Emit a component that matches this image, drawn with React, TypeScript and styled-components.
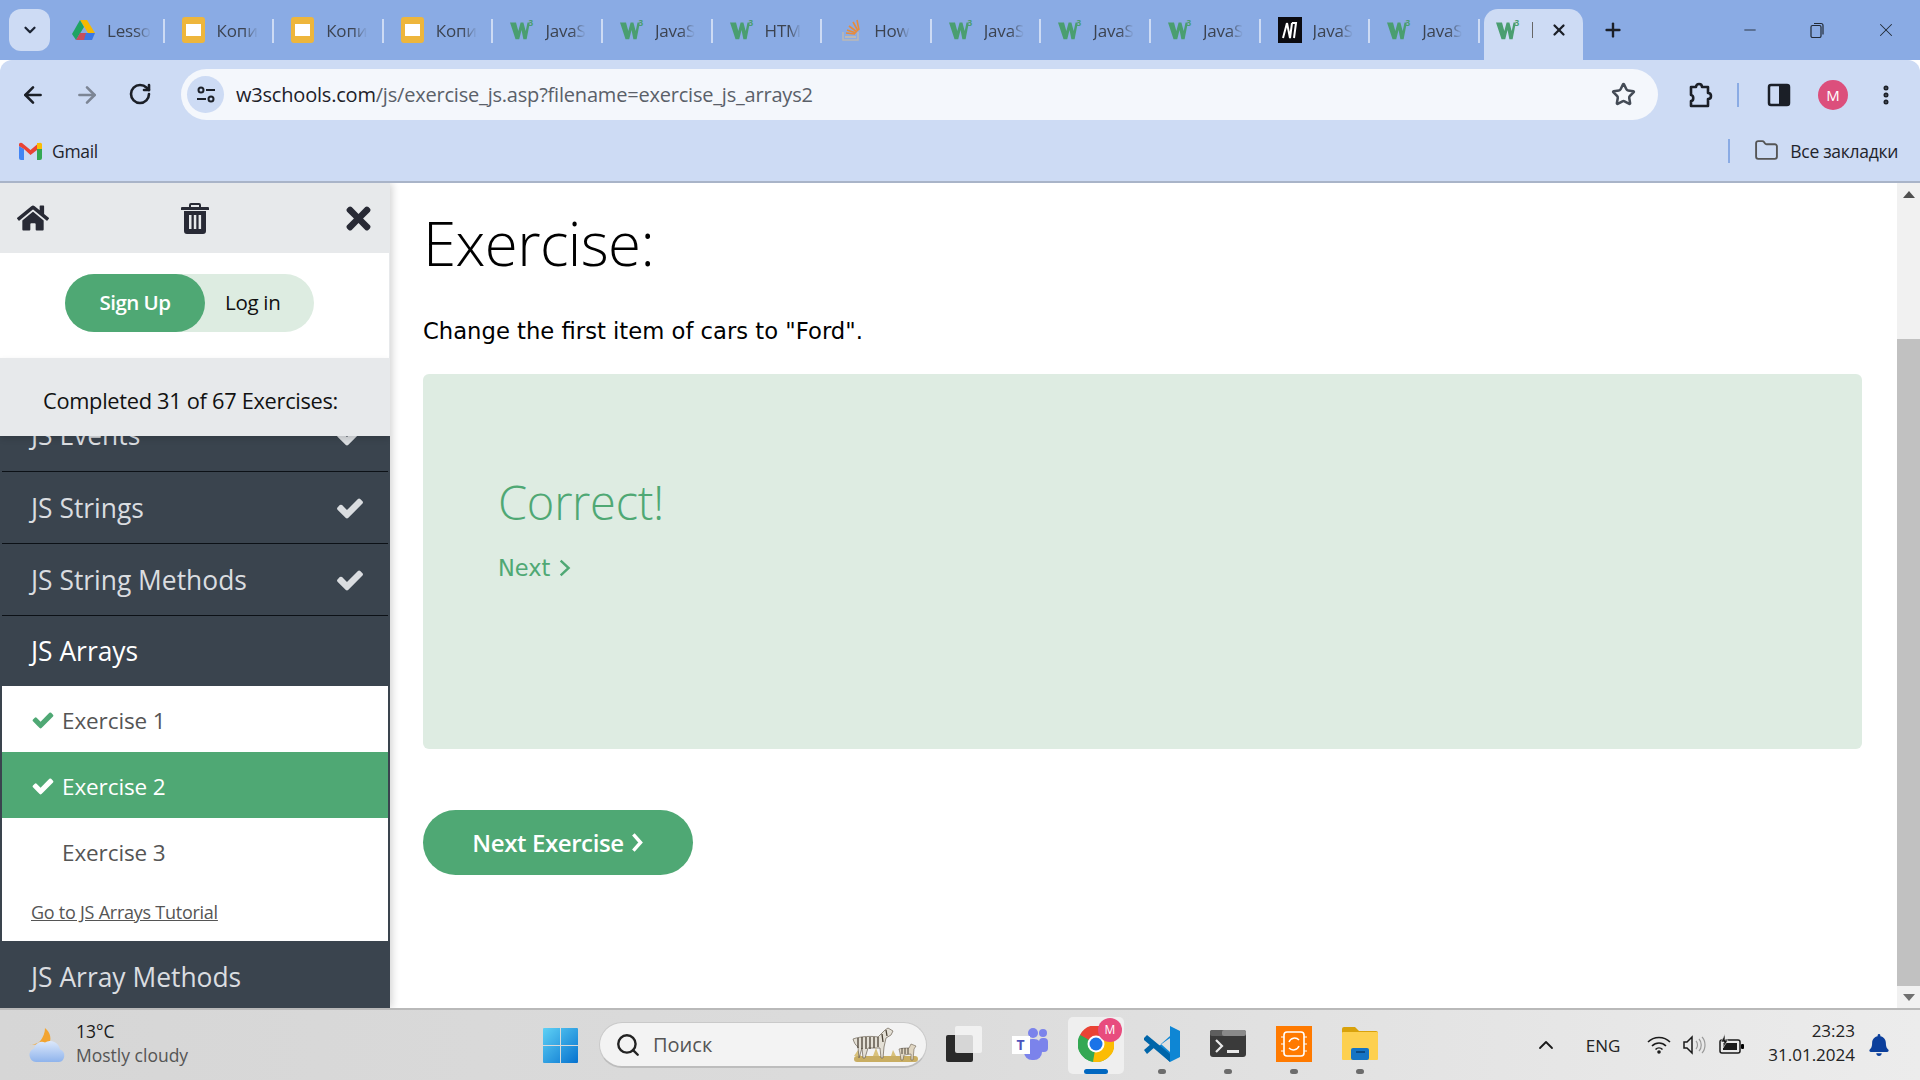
import React from "react";
import styled, { createGlobalStyle } from "styled-components";
import {
  ArrowLeft, ArrowRight, RotateCw, Star, MoreVertical, Plus, X, Minus, ChevronUp, Folder, Search, ChevronDown,
} from "lucide-react";
import { FaHome, FaTimes, FaBell } from "react-icons/fa";

const Global = createGlobalStyle`
  html, body { margin: 0; padding: 0; overflow: hidden; background: #fff; }
  * { box-sizing: border-box; }
  #root { width: 1920px; height: 1080px; }
`;

const Screen = styled.div`
  width: 1920px; height: 1080px; display: flex; flex-direction: column; overflow: hidden;
  font-family: "Open Sans", "Liberation Sans", sans-serif; color: #111;
`;
const TabStrip = styled.div`
  height: 60px; background: #8aabe4; display: flex; align-items: flex-end; padding-left: 9px; flex: none;
`;
const Collapse = styled.div`
  width: 41px; height: 42px; margin: 0 5px 9px 0; border-radius: 12px; background: #cddbf4;
  display: flex; align-items: center; justify-content: center; color: #1c2433;
`;
const Tab = styled.div`
  width: 109.6px; height: 51px; display: flex; align-items: center; padding: 0 0 9px 17px; flex: none; position: relative;
  &::after { content: ""; position: absolute; right: 0; top: 10px; height: 24px; width: 2px; background: #cddbf4; }
`;
const FaviconBox = styled.span`
  width: 24px; height: 24px; flex: none; display: flex; align-items: center; justify-content: center;
`;
const TabTitle = styled.span`
  margin-left: 11px; white-space: nowrap; font-size: 17px; color: #3c4350; letter-spacing: -0.2px;
  -webkit-mask-image: linear-gradient(to right, #000 65%, transparent);
  mask-image: linear-gradient(to right, #000 65%, transparent);
`;
const ActiveTab = styled.div`
  width: 99px; height: 51px; background: #cddbf4; border-radius: 14px 14px 0 0; display: flex; align-items: center;
  padding: 0 0 9px 12px; flex: none; margin-left: 4px; color: #1b1f27;
`;
const Cursor = styled.span`
  margin-left: 12px; width: 1px; height: 16px; background: #666;
`;
const TabClose = styled.span`
  margin-left: 17px; display: flex;
`;
const NewTab = styled.span`
  margin: 0 0 9px 18px; display: flex; width: 24px; height: 42px; align-items: center; justify-content: center; color: #1b1f27;
`;
const WindowControls = styled.div`
  margin: 0 23px 9px auto; height: 42px; display: flex; align-items: center; gap: 50px; color: #222a36;
`;
const Toolbar = styled.div`
  height: 69px; background: #cddbf4; display: flex; align-items: center; padding: 0 0 0 20px; flex: none; border-radius: 12px 12px 0 0;
`;
const NavIcon = styled.span<{ $dim?: boolean }>`
  width: 26px; height: 26px; margin-right: 28px; display: flex; color: ${(p) => (p.$dim ? "#7c8594" : "#1b1f27")};
`;
const Omnibox = styled.div`
  width: 1477px; height: 51px; margin-left: -1px; background: #f4f7fc; border-radius: 26px; display: flex; align-items: center; padding: 0 18px 0 6px;
`;
const SiteChip = styled.span`
  width: 37px; height: 37px; border-radius: 50%; background: #cddbf4; display: flex; align-items: center; justify-content: center; flex: none;
`;
const Url = styled.span`
  margin-left: 12px; font-size: 20px; color: #5a6069; white-space: nowrap; letter-spacing: -0.2px;
  b { font-weight: 400; color: #1d2129; }
`;
const StarWrap = styled.span`
  margin-left: auto; display: flex; color: #444b56; margin-right: 4px;
`;
const ToolRight = styled.div`
  display: flex; align-items: center; flex: 1; padding-left: 28px; color: #1b1f27;
`;
const ToolSep = styled.span`
  width: 2px; height: 24px; background: #8aabe4; margin: 0 28px 0 23px;
`;
const Avatar = styled.span`
  width: 30px; height: 30px; border-radius: 50%; background: #dc4f7c; color: #fff; font-size: 15px;
  display: flex; align-items: center; justify-content: center; margin-left: 27px;
`;
const Dots = styled.span`
  display: flex; margin-left: 26px; color: #1b1f27;
`;
const BookmarkBar = styled.div`
  height: 54px; background: #cddbf4; border-bottom: 2px solid #a9b4c8; display: flex; align-items: center; padding: 0 22px 9px 19px; flex: none;
`;
const BookmarkLabel = styled.span<{ $size?: number; $gap?: number }>`
  font-size: ${(p) => p.$size ?? 17}px; color: #1f242c; margin-left: ${(p) => p.$gap ?? 11}px; letter-spacing: -0.3px;
`;
const BookSep = styled.span`
  width: 2px; height: 24px; background: #8aabe4; margin-left: auto; margin-right: 24px;
`;
const Page = styled.div`
  flex: 1; min-height: 0; display: flex; background: #fff; overflow: hidden;
`;
const Sidebar = styled.aside`
  width: 390px; flex: none; display: flex; flex-direction: column; background: #e7e9eb; box-shadow: 2px 0 8px rgba(0,0,0,.18); overflow: hidden; position: relative;
`;
const SideHead = styled.div`
  height: 70px; background: #e7e9eb; display: flex; align-items: center; justify-content: space-between; padding: 0 14px 0 17px; color: #282a35; flex: none;
`;
const AuthPanel = styled.div`
  height: 105px; background: #fff; padding: 21px 0 0 65px; flex: none; margin-right: 1px;
`;
const AuthPill = styled.div`
  width: 249px; height: 58px; border-radius: 29px; background: #ddece1; display: flex; align-items: center;
`;
const SignUp = styled.span`
  width: 140px; height: 58px; padding-bottom: 2px; border-radius: 29px; background: #4fa874; color: #fff; font-size: 20.500px; font-weight: 600;
  display: flex; align-items: center; justify-content: center; letter-spacing: -0.5px;
`;
const LogIn = styled.span`
  margin: 0 0 2px 20px; font-size: 20.500px; letter-spacing: -0.3px; color: #111;
`;
const Progress = styled.div`
  height: 78px; background: #e7e9eb; padding: 28px 9px 0 0; text-align: center; font-size: 21.800px; color: #111; letter-spacing: -0.3px; flex: none;
  box-shadow: 0 3px 6px rgba(0,0,0,.12); position: relative; z-index: 1; line-height: 30px;
`;
const Lessons = styled.div`
  flex: 1; min-height: 0; overflow: hidden; background: #3a444e;
`;
const Lesson = styled.div<{ $active?: boolean; $clip?: boolean }>`
  height: ${(p) => (p.$clip ? 36 : p.$active ? 70 : 72)}px; margin: 0 2px; padding-left: 29px; border-bottom: 1px solid ${(p) => (p.$active ? "transparent" : "#0c1116")};
  display: flex; align-items: ${(p) => (p.$clip ? "flex-start" : "center")}; justify-content: space-between; padding-right: 23px;
  color: ${(p) => (p.$active ? "#fff" : "#dadde0")}; font-size: 26.400px; font-weight: ${(p) => (p.$active ? 500 : 400)}; overflow: hidden;
`;
const ClipLabel = styled.span`
  display: flex; width: 100%; justify-content: space-between; align-items: center; height: 34px; margin-top: -18px; flex: none;
`;
const ExercisePanel = styled.div`
  background: #fff; margin: 0 2px; height: 255px;
`;
const ExerciseRow = styled.div<{ $on?: boolean }>`
  height: 66px; display: flex; align-items: center; padding: 2px 0 0 29px; font-size: 22.500px; letter-spacing: -0.1px;
  background: ${(p) => (p.$on ? "#4fa874" : "#fff")}; color: ${(p) => (p.$on ? "#fff" : "#555")};
`;
const Tick = styled.span<{ $on?: boolean }>`
  width: 31px; display: flex; color: ${(p) => (p.$on ? "#fff" : "#4fa874")}; flex: none;
`;
const TutorialLink = styled.a`
  display: block; margin: 16px 0 0 29px; font-size: 18px; color: #555; text-decoration: underline; letter-spacing: -0.25px;
`;
const Main = styled.main`
  flex: 1; min-width: 0; padding: 25px 35px 0 33px;
`;
const Title = styled.h1`
  margin: 0; font-size: 60px; line-height: 70px; font-weight: 350; color: #000; letter-spacing: -0.6px;
`;
const Question = styled.p`
  margin: 39px 0 0; font-family: "DejaVu Sans", sans-serif; font-size: 22.700px; line-height: 28px; color: #000;
`;
const ResultBox = styled.div`
  margin-top: 29px; height: 375px; background: #deece2; border-radius: 6px; padding: 97px 0 0 75px; color: #4fa874;
`;
const Correct = styled.div`
  font-size: 47px; line-height: 62px; font-weight: 350; letter-spacing: -0.3px;
`;
const NextLink = styled.div`
  margin-top: 19px; line-height: 32px; display: flex; align-items: center; gap: 9px;
  font-family: "DejaVu Sans", sans-serif; font-size: 22.500px;
`;
const NextButton = styled.button`
  margin-top: 61px; width: 270px; height: 65px; border: 0; border-radius: 33px; background: #4fa874; color: #fff; font-family: "Open Sans", sans-serif;
  font-size: 24px; font-weight: 600; display: flex; align-items: center; justify-content: center; gap: 7px; letter-spacing: -0.4px;
`;
const Scrollbar = styled.div`
  width: 23px; flex: none; background: #f1f1f1; display: flex; flex-direction: column; align-items: center;
`;
const ScrollArrow = styled.span<{ $down?: boolean }>`
  height: 22px; width: 100%; display: flex; align-items: center; justify-content: center; flex: none;
  &::before { content: ""; border-left: 6px solid transparent; border-right: 6px solid transparent;
    ${(p) => (p.$down ? "border-top: 7px solid #707070;" : "border-bottom: 7px solid #505050;")} }
`;
const ScrollGap = styled.span`
  height: 134px; flex: none;
`;
const ScrollThumb = styled.span`
  flex: 1; width: 100%; background: #c1c1c1; margin: 0 1px;
`;
const Taskbar = styled.footer`
  height: 72px; flex: none; border-top: 2px solid #b9b9b9; background: linear-gradient(to right, #d6d6d6, #dcdcdc 50%, #ececec);
  display: flex; align-items: center; padding: 0 0 0 28px;
`;
const Weather = styled.div`
  width: 515px; display: flex; align-items: center; gap: 11px; flex: none;
`;
const WeatherText = styled.div`
  font-size: 17.500px; line-height: 24px; color: #1a1a1a; padding-bottom: 4px;
  small { display: block; font-size: 17.500px; color: #555; }
`;
const SearchBox = styled.div`
  width: 328px; height: 46px; margin-left: 21px; border-radius: 23px; background: #f3f3f3; border: 1px solid #c9c9c9; border-bottom: 2px solid #bdbdbd;
  display: flex; align-items: center; padding: 0 6px 0 15px; color: #222;
`;
const SearchText = styled.span`
  margin-left: 12px; font-size: 20px; color: #555;
`;
const Zebra = styled.span`
  margin-left: auto; display: flex;
`;
const Cells = styled.div`
  display: flex; margin-left: 4px;
`;
const Cell = styled.div<{ $active?: boolean }>`
  width: 66px; height: 57px; display: flex; flex-direction: column; align-items: center; justify-content: flex-end; position: relative;
  &::before { content: ""; position: absolute; left: 5px; right: 5px; top: 0; bottom: 0; border-radius: 5px; background: ${(p) => (p.$active ? "#efefef" : "transparent")}; }
`;
const CellIcon = styled.span`
  width: 36px; height: 36px; display: flex; align-items: center; position: relative; margin-bottom: 7px;
`;
const Indicator = styled.span<{ $active?: boolean; $off?: boolean }>`
  width: ${(p) => (p.$active ? 24 : 8)}px; height: 5px; border-radius: 3px; position: relative;
  background: ${(p) => (p.$off ? "transparent" : p.$active ? "#0067c0" : "#6c6c6c")};
`;
const ChromeBadge = styled.span`
  position: absolute; right: -8px; top: -8px; width: 24px; height: 24px; border-radius: 50%; background: #e84c7e; color: #fff; font-size: 12px; display: flex; align-items: center; justify-content: center;
`;
const Tray = styled.div`
  margin-left: auto; display: flex; align-items: center; color: #1a1a1a; padding-right: 30px;
`;
const Eng = styled.span`
  margin: 0 27px 0 28px; font-size: 17px; color: #222;
`;
const TrayIcons = styled.div`
  display: flex; align-items: center; gap: 12px; margin-right: 24px;
`;
const Clock = styled.div`
  text-align: right; font-size: 17px; line-height: 24px; color: #222; margin-right: 13px; padding-bottom: 4px;
`;

const Check = ({ size }: { size: number }) => (
  <svg width={size} height={size} viewBox="0 0 1792 1792" fill="currentColor">
    <path d="M1671 566q0 40-28 68l-724 724-136 136q-28 28-68 28t-68-28l-136-136-362-362q-28-28-28-68t28-68l136-136q28-28 68-28t68 28l294 295 656-657q28-28 68-28t68 28l136 136q28 28 28 68z" />
  </svg>
);
const Chevron = ({ w, h, sw }: { w: number; h: number; sw: number }) => (
  <svg width={w} height={h} viewBox={`0 0 ${w} ${h}`} fill="none" stroke="currentColor" strokeWidth={sw}>
    <path d={`M${sw * 0.7} ${sw * 0.7}L${w - sw} ${h / 2}L${sw * 0.7} ${h - sw * 0.7}`} />
  </svg>
);
const W3 = () => (
  <svg width="26" height="24" viewBox="0 0 26 24">
    <polygon points="0,4 6.500,4 9,13 11.500,4 14.500,4 17,13 19,4 21.500,4 18,22 14.500,22 12.500,12 10,22 6,22" fill="#4a9e70" />
    <text x="20" y="8" fontSize="9" fontWeight="700" fill="#4a9e70" fontFamily="Open Sans">3</text>
  </svg>
);
const Drive = () => (
  <svg width="24" height="22" viewBox="0 0 24 22">
    <polygon points="8,1 15,1 23,14 16,14" fill="#f6b900" />
    <polygon points="8,1 0,15 4,21 12,8" fill="#1fa463" />
    <polygon points="4,21 20,21 23,14 8,14" fill="#3977e6" />
    <polygon points="4,21 12,21 14,14 8,14" fill="#e8453c" opacity=".8" />
  </svg>
);
const Slides = () => (
  <svg width="24" height="26" viewBox="0 0 24 26">
    <rect width="23" height="26" rx="3" fill="#eeb63c" />
    <rect x="4" y="7" width="15" height="12" fill="#fff" />
  </svg>
);
const Stack = () => (
  <svg width="20" height="24" viewBox="0 0 20 24" fill="none">
    <path d="M4 19h11" stroke="#bcb9b5" strokeWidth="2" /><path d="M2 14v8h15v-8" stroke="#bcb9b5" strokeWidth="1.500" />
    <path d="M5 15l9 1M6 12l9 3M8 8l8 6M12 4l5 9M16 2l2 10" stroke="#e88b3a" strokeWidth="1.600" />
  </svg>
);
const MdnM = () => (
  <svg width="24" height="26" viewBox="0 0 24 26">
    <rect width="24" height="26" fill="#0b0b10" />
    <path d="M5 21L9 6M12 21L14 6M9 6l3 15M14 6l4 0-2 15" stroke="#fff" strokeWidth="2" fill="none" />
  </svg>
);
const Gmail = () => (
  <svg width="23" height="18" viewBox="0 0 23 18">
    <path d="M0 4v12a2 2 0 0 0 2 2h3V7z" fill="#4285f4" />
    <path d="M23 4v12a2 2 0 0 1-2 2h-3V7z" fill="#34a853" />
    <path d="M18 1v6l5 0V3a2 2 0 0 0-3-2z" fill="#fbbc04" />
    <path d="M5 7L0 4V3a2 2 0 0 1 3-2l8.500 7L18 2.500V8l-6.500 5z" fill="#ea4335" />
  </svg>
);
const Trash = () => (
  <svg width="28" height="32" viewBox="0 0 28 32" fill="#282a35">
    <path d="M10 1h8a2 2 0 0 1 2 2v2h7a1 1 0 0 1 1 1v2H0V6a1 1 0 0 1 1-1h7V3a2 2 0 0 1 2-2zm0 2v2h8V3z" fillRule="evenodd" />
    <path d="M3 9h22v20a3 3 0 0 1-3 3H6a3 3 0 0 1-3-3zm5 4v14h2.500V13zm4.800 0v14h2.500V13zm4.800 0v14h2.500V13z" fillRule="evenodd" />
  </svg>
);
const Tune = () => (
  <svg width="20" height="20" viewBox="0 0 20 20" fill="none" stroke="#1d2129" strokeWidth="2">
    <circle cx="5" cy="5" r="2.500" /><path d="M10 5h9M1 14h9" /><circle cx="15" cy="14" r="2.500" />
  </svg>
);
const Puzzle = () => (
  <svg width="28" height="28" viewBox="0 0 28 28" fill="none" stroke="#1b1f27" strokeWidth="2.600" strokeLinejoin="round">
    <path d="M5 6h5c0-4 6-4 6 0h6v6c4 0 4 6 0 6v7H5v-5c3 0 3-6 0-6z" />
  </svg>
);
const SidePanel = () => (
  <svg width="24" height="24" viewBox="0 0 24 24">
    <rect x="2" y="2" width="20" height="20" rx="2" fill="none" stroke="#1b1f27" strokeWidth="2.500" /><rect x="12" y="2" width="10" height="20" fill="#1b1f27" />
  </svg>
);
const Restore = () => (
  <svg width="16" height="16" viewBox="0 0 16 16" fill="none" stroke="#222a36" strokeWidth="1.200">
    <rect x="2" y="3.500" width="10" height="12" rx="1.500" /><path d="M5 1.500h7a2 2 0 0 1 2 2v9" />
  </svg>
);
const CloudMoon = () => (
  <svg width="37" height="36" viewBox="0 0 37 36">
    <defs><linearGradient id="cl" x1="0" y1="0" x2="0" y2="1"><stop offset="0" stopColor="#dce8fb" /><stop offset="1" stopColor="#8fb4ec" /></linearGradient></defs>
    <path d="M17 1c6 5 7 12 3 18L1 17c5 1 9 0 12-4 2-3 4-7 4-12z" fill="#f2a431" />
    <path d="M8 35a7 7 0 0 1-2-13.500 8 8 0 0 1 11-6 10 10 0 0 1 15 7 6.500 6.500 0 0 1-1 12.500z" fill="url(#cl)" />
  </svg>
);
const WinLogo = () => (
  <svg width="35" height="35" viewBox="0 0 35 35">
    <defs><linearGradient id="w" x1="0" y1="0" x2="1" y2="1"><stop offset="0" stopColor="#5fd1f5" /><stop offset="1" stopColor="#0672cf" /></linearGradient></defs>
    <path d="M0 1a1 1 0 0 1 1-1h16v17H0zM18 0h16a1 1 0 0 1 1 1v16H18zM0 18h17v17H1a1 1 0 0 1-1-1zM18 18h17v16a1 1 0 0 1-1 1H18z" fill="url(#w)" />
  </svg>
);
const ZebraArt = () => (
  <svg width="69" height="36" viewBox="0 0 69 36">
    <rect x="3" y="29" width="64" height="6" rx="3" fill="#c9ae63" />
    <path d="M3 29l4-6 3 6zM22 29l3-8 3 8zM40 29l2-6 3 6z" fill="#d9c27c" />
    <path d="M2 12c8-3 20-3 25-2l7-7 3-2 5 3-2 4-5 3-2 9-1 11h-2l-1-10-12 0-3 10h-2l-1-10-3 10H8l-1-11c-3-2-4-5-5-8z" fill="#e4e0d6" stroke="#6a6052" strokeWidth=".7" />
    <path d="M7 11v10M11 10v12M15 10v12M19 10v12M23 10v11M27 10v10M31 7l1 8M35 3l1 6" stroke="#4b4336" strokeWidth="1.300" />
    <path d="M48 22c3-1 8-1 10-1l2-4 5 2-2 3-1 11h-2v-6l-7 1-1 5h-2l-1-7z" fill="#e0d6c2" stroke="#6a6052" strokeWidth=".6" />
    <path d="M51 21v6M54 21v6M57 21v6" stroke="#4b4336" strokeWidth="1" />
  </svg>
);
const TaskView = () => (
  <svg width="36" height="36" viewBox="0 0 36 36">
    <rect x="0" y="9" width="27" height="27" rx="2" fill="#2a2a2a" />
    <rect x="9" y="0" width="27" height="27" rx="2" fill="#f4f4f4" opacity=".85" />
  </svg>
);
const Teams = () => (
  <svg width="36" height="32" viewBox="0 0 36 32">
    <circle cx="31" cy="5" r="4" fill="#7b83eb" /><rect x="27" y="10" width="9" height="14" rx="4" fill="#7b83eb" />
    <circle cx="21" cy="5" r="5" fill="#7b83eb" /><rect x="12" y="11" width="18" height="21" rx="8" fill="#7b83eb" />
    <rect x="0" y="8" width="18" height="18" fill="#fff" />
    <text x="4.500" y="22" fontSize="14" fontWeight="700" fill="#4b53bc" fontFamily="Open Sans">T</text>
  </svg>
);
const Chrome = () => (
  <svg width="36" height="36" viewBox="0 0 36 36">
    <circle cx="18" cy="18" r="18" fill="#34a853" />
    <path d="M18 18L2 9a18 18 0 0 1 32 0z" fill="#ea4335" /><path d="M2 9a18 18 0 0 0 13 26.800L18 18z" fill="#34a853" />
    <path d="M34 9a18 18 0 0 1-19 26.800L18 18z" fill="#fbbc04" />
    <circle cx="18" cy="18" r="8.500" fill="#fff" /><circle cx="18" cy="18" r="6.500" fill="#1a73e8" />
  </svg>
);
const VSCode = () => (
  <svg width="36" height="36" viewBox="0 0 36 36">
    <path d="M26 0l10 5v26l-10 5-14-14 14-10zm0 10L17 18l9 8z" fill="#0e86d4" fillRule="evenodd" />
    <path d="M3 9l23 19v8L0 14V12zM0 24l8-7 4 3-9 8z" fill="#0065a9" />
  </svg>
);
const Terminal = () => (
  <svg width="36" height="27" viewBox="0 0 36 27">
    <rect width="36" height="27" rx="3" fill="#3a3a3a" /><rect width="22" height="6" rx="2" fill="#5e5e5e" /><rect x="12" width="24" height="6" rx="2" fill="#8a8a8a" />
    <path d="M6 10l6 6-6 6" fill="none" stroke="#e8e8e8" strokeWidth="2.200" /><rect x="17" y="20" width="12" height="3" fill="#e8e8e8" />
  </svg>
);
const Chip = () => (
  <svg width="36" height="36" viewBox="0 0 36 36">
    <rect width="36" height="36" fill="#ff7a00" /><rect x="8" y="6" width="20" height="24" rx="3" fill="none" stroke="#fff" strokeWidth="1.600" />
    <path d="M23 14a6 6 0 0 0-10 2M13 22a6 6 0 0 0 10-2" fill="none" stroke="#fff" strokeWidth="1.500" />
    <path d="M5 11h3M5 18h3M5 25h3M28 11h3M28 18h3M28 25h3" stroke="#fff" strokeWidth="1.200" />
  </svg>
);
const Explorer = () => (
  <svg width="36" height="33" viewBox="0 0 36 33">
    <path d="M0 2a2 2 0 0 1 2-2h11l4 4h17a2 2 0 0 1 2 2v3H0z" fill="#d9a20b" /><rect y="5" width="36" height="28" rx="1" fill="#fdd04f" />
    <rect x="9" y="21" width="18" height="12" rx="2" fill="#1574c4" /><rect x="14" y="24" width="9" height="2" fill="#0a4a85" />
  </svg>
);
const Wifi = () => (
  <svg width="24" height="18" viewBox="0 0 24 18" fill="none" stroke="#1a1a1a" strokeWidth="1.600">
    <path d="M1 6c6-6 16-6 22 0M5 10c4-4 10-4 14 0M8.500 13.500c2-2 5-2 7 0" /><circle cx="12" cy="16" r="1" fill="#1a1a1a" />
  </svg>
);
const Speaker = () => (
  <svg width="24" height="20" viewBox="0 0 24 20" fill="none">
    <path d="M1 7h3l5-5v16l-5-5H1z" stroke="#1a1a1a" strokeWidth="1.500" />
    <path d="M13 6c2 2 2 6 0 8M16 4c3 3 3 9 0 12M19 2c4 4 4 12 0 16" stroke="#9a9a9a" strokeWidth="1.200" />
  </svg>
);
const Battery = () => (
  <svg width="25" height="22" viewBox="0 0 25 22">
    <rect x="1" y="6" width="20" height="13" rx="2" fill="none" stroke="#1a1a1a" strokeWidth="1.500" /><rect x="4" y="9" width="14" height="7" fill="#1a1a1a" /><rect x="22" y="10" width="3" height="5" rx="1" />
    <path d="M6 0L2 8h3l-1 6 5-8H6z" fill="#1a1a1a" stroke="#ececec" strokeWidth=".6" />
  </svg>
);

const tabs: [React.ReactNode, string][] = [
  [<Drive />, "Lesso"], [<Slides />, "Копи"], [<Slides />, "Копи"], [<Slides />, "Копи"],
  [<W3 />, "JavaS"], [<W3 />, "JavaS"], [<W3 />, "HTM"], [<Stack />, "How"],
  [<W3 />, "JavaS"], [<W3 />, "JavaS"], [<W3 />, "JavaS"], [<MdnM />, "JavaS"], [<W3 />, "JavaS"],
];
const apps: { icon: React.ReactNode; dot?: boolean; active?: boolean; badge?: boolean }[] = [
  { icon: <TaskView /> }, { icon: <Teams /> }, { icon: <Chrome />, active: true, badge: true },
  { icon: <VSCode />, dot: true }, { icon: <Terminal />, dot: true }, { icon: <Chip />, dot: true }, { icon: <Explorer />, dot: true },
];

export default function App() {
  return (
    <Screen>
      <Global />
      <TabStrip>
        <Collapse><ChevronDown size={18} strokeWidth={3} /></Collapse>
        {tabs.map(([icon, title], i) => (
          <Tab key={i}><FaviconBox>{icon}</FaviconBox><TabTitle>{title}</TabTitle></Tab>
        ))}
        <ActiveTab>
          <FaviconBox><W3 /></FaviconBox><Cursor /><TabClose><X size={18} strokeWidth={3} /></TabClose>
        </ActiveTab>
        <NewTab><Plus size={22} strokeWidth={2.6} /></NewTab>
        <WindowControls>
          <Minus size={18} strokeWidth={1.2} /><Restore /><X size={22} strokeWidth={1.1} />
        </WindowControls>
      </TabStrip>
      <Toolbar>
        <NavIcon><ArrowLeft size={26} strokeWidth={2.4} /></NavIcon>
        <NavIcon $dim><ArrowRight size={26} strokeWidth={2.4} /></NavIcon>
        <NavIcon><RotateCw size={24} strokeWidth={2.6} /></NavIcon>
        <Omnibox>
          <SiteChip><Tune /></SiteChip>
          <Url><b>w3schools.com</b>/js/exercise_js.asp?filename=exercise_js_arrays2</Url>
          <StarWrap><Star size={25} strokeWidth={2.4} /></StarWrap>
        </Omnibox>
        <ToolRight>
          <Puzzle /><ToolSep /><SidePanel /><Avatar>M</Avatar>
          <Dots><MoreVertical size={24} strokeWidth={3} /></Dots>
        </ToolRight>
      </Toolbar>
      <BookmarkBar>
        <Gmail /><BookmarkLabel $size={17.5} $gap={10}>Gmail</BookmarkLabel>
        <BookSep />
        <Folder size={25} color="#555" strokeWidth={1.8} /><BookmarkLabel $size={17.5}>Все закладки</BookmarkLabel>
      </BookmarkBar>
      <Page>
        <Sidebar>
          <SideHead><FaHome size={32} /><Trash /><FaTimes size={35} /></SideHead>
          <AuthPanel><AuthPill><SignUp>Sign Up</SignUp><LogIn>Log in</LogIn></AuthPill></AuthPanel>
          <Progress>Completed 31 of 67 Exercises:</Progress>
          <Lessons>
            <Lesson $clip><ClipLabel>JS Events<Check size={30} /></ClipLabel></Lesson>
            <Lesson>JS Strings<Check size={30} /></Lesson>
            <Lesson>JS String Methods<Check size={30} /></Lesson>
            <Lesson $active>JS Arrays</Lesson>
            <ExercisePanel>
              <ExerciseRow><Tick><Check size={24} /></Tick>Exercise 1</ExerciseRow>
              <ExerciseRow $on><Tick $on><Check size={24} /></Tick>Exercise 2</ExerciseRow>
              <ExerciseRow><Tick />Exercise 3</ExerciseRow>
              <TutorialLink>Go to JS Arrays Tutorial</TutorialLink>
            </ExercisePanel>
            <Lesson>JS Array Methods</Lesson>
          </Lessons>
        </Sidebar>
        <Main>
          <Title>Exercise:</Title>
          <Question>Change the first item of cars to "Ford".</Question>
          <ResultBox>
            <Correct>Correct!</Correct>
            <NextLink>Next<Chevron w={12} h={18} sw={2.4} /></NextLink>
          </ResultBox>
          <NextButton>Next Exercise<Chevron w={13} h={21} sw={3.4} /></NextButton>
        </Main>
        <Scrollbar>
          <ScrollArrow /><ScrollGap /><ScrollThumb /><ScrollArrow $down />
        </Scrollbar>
      </Page>
      <Taskbar>
        <Weather>
          <CloudMoon />
          <WeatherText>13°C<small>Mostly cloudy</small></WeatherText>
        </Weather>
        <WinLogo />
        <SearchBox>
          <Search size={26} strokeWidth={2.2} /><SearchText>Поиск</SearchText>
          <Zebra><ZebraArt /></Zebra>
        </SearchBox>
        <Cells>
          {apps.map((a, i) => (
            <Cell key={i} $active={a.active}>
              <CellIcon>{a.icon}{a.badge && <ChromeBadge>M</ChromeBadge>}</CellIcon>
              <Indicator $active={a.active} $off={!a.dot && !a.active} />
            </Cell>
          ))}
        </Cells>
        <Tray>
          <ChevronUp size={24} strokeWidth={1.8} />
          <Eng>ENG</Eng>
          <TrayIcons><Wifi /><Speaker /><Battery /></TrayIcons>
          <Clock>23:23<br />31.01.2024</Clock>
          <FaBell size={22} color="#0b3f9c" />
        </Tray>
      </Taskbar>
    </Screen>
  );
}
